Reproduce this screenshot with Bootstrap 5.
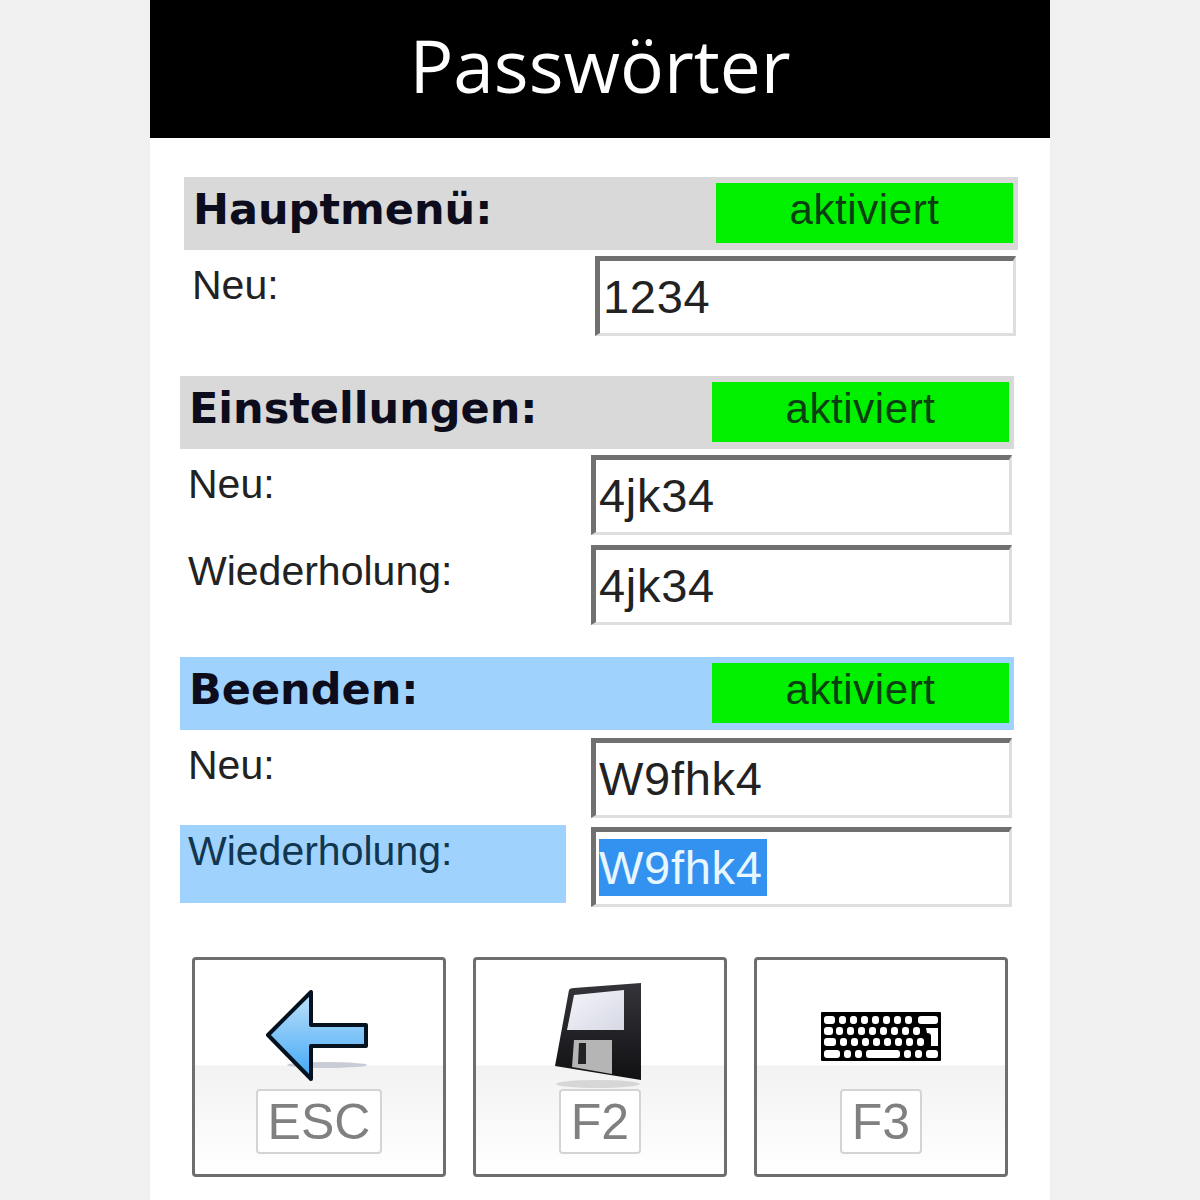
<!DOCTYPE html>
<html lang="de">

<head>
    <meta charset="UTF-8">
    <title>Passwörter</title>
    <meta name="viewport" content="width=device-width, initial-scale=1">
    <link href="https://cdn.jsdelivr.net/npm/bootstrap@5.3.0/dist/css/bootstrap.min.css" rel="stylesheet">
    <style>
        html, body { height: 100%; }
        body { background: #f0f0f0; font-family: "Liberation Sans", Arial, sans-serif; color: #1a1a1a; overflow: hidden; }
        .pw-panel { width: 900px; height: 1200px; margin: 0 auto; background: #fff; overflow: hidden; }
        .pw-title { height: 138px; background: #000; color: #fff; font-family: "Open Sans", sans-serif; font-size: 73px; line-height: 130px; }
        .pw-body { padding: 39px 36px 0 30px; }
        .pw-section { margin-bottom: 32px; }
        .pw-section.first { padding-left: 4px; margin-right: -4px; margin-bottom: 40px; }
        .pw-section.last .pw-field { margin-top: 2px; }
        .pw-head { height: 73px; background: #d9d9d9; padding: 6px 5px 7px 9px; }
        .pw-head.active { background: #9fd3fd; }
        .pw-head-label { font-family: "DejaVu Sans", sans-serif; font-weight: 700; font-size: 43px; line-height: 52px; color: #0c0c1c; }
        .pw-state { width: 297px; height: 60px; background: #00f000; color: #0a3f12; font-size: 42px; line-height: 54px; text-align: center; letter-spacing: .6px; }
        .pw-row { height: 80px; margin-top: 6px; }
        .pw-row + .pw-row { margin-top: 10px; }
        .pw-row.tight { margin-top: 9px; }
        .pw-label { width: 386px; height: 78px; padding-left: 8px; font-size: 41px; line-height: 58px; color: #222; }
        .pw-row + .pw-row .pw-label { margin-top: -2px; line-height: 56px; }
        .pw-row.tight .pw-label { margin-top: 0; line-height: 52px; }
        .pw-label.active { background: #9fd3fd; color: #12364f; }
        .pw-field { width: 421px; height: 80px; margin-left: 25px; background: #fff; border-style: solid; border-color: #707070 #dedede #dedede #707070; border-width: 5px 3px 3px 5px; padding: 8px 0 0 3px; font-size: 47px; line-height: 56px; letter-spacing: .7px; color: #222; }
        .pw-field .picked { display: inline-block; vertical-align: top; margin-top: -1px; line-height: 57px; background: #3392f0; color: #e8f6ff; padding-right: 4px; }
        .pw-keys { gap: 27px; padding-left: 12px; margin-top: 52px; }
        .pw-key { width: 254px; height: 220px; border: 3px solid #6e6e6e; border-radius: 4px; background: linear-gradient(#fff 0, #fff 49%, #f2f2f2 49.5%, #fff 100%); }
        .pw-key svg { display: block; filter: blur(.5px); }
        .pw-cap { height: 65px; margin-top: 1px; padding: 0 10px; border: 2px solid #d4d4d4; border-radius: 4px; background: #fff; color: #808080; font-size: 50px; line-height: 62px; }
        .pw-icon { height: 128px; }
        .pw-lift-arrow { margin: 0 4px 5px 0; }
        .pw-lift-keyboard { margin-bottom: 26px; }
    </style>
</head>

<body>
    <div class="pw-panel">
        <div class="pw-title text-center">Passwörter</div>

        <div class="pw-body">
            <div class="pw-section first">
                <div class="pw-head d-flex justify-content-between">
                    <div class="pw-head-label">Hauptmenü:</div>
                    <div class="pw-state">aktiviert</div>
                </div>
                <div class="pw-row d-flex">
                    <div class="pw-label">Neu:</div>
                    <div class="pw-field">1234</div>
                </div>
            </div>

            <div class="pw-section">
                <div class="pw-head d-flex justify-content-between">
                    <div class="pw-head-label">Einstellungen:</div>
                    <div class="pw-state">aktiviert</div>
                </div>
                <div class="pw-row d-flex">
                    <div class="pw-label">Neu:</div>
                    <div class="pw-field">4jk34</div>
                </div>
                <div class="pw-row d-flex">
                    <div class="pw-label">Wiederholung:</div>
                    <div class="pw-field">4jk34</div>
                </div>
            </div>

            <div class="pw-section last">
                <div class="pw-head active d-flex justify-content-between">
                    <div class="pw-head-label">Beenden:</div>
                    <div class="pw-state">aktiviert</div>
                </div>
                <div class="pw-row d-flex">
                    <div class="pw-label">Neu:</div>
                    <div class="pw-field">W9fhk4</div>
                </div>
                <div class="pw-row tight d-flex">
                    <div class="pw-label active">Wiederholung:</div>
                    <div class="pw-field"><span class="picked">W9fhk4</span></div>
                </div>
            </div>

            <div class="pw-keys d-flex">
                <div class="pw-key d-flex flex-column align-items-center">
                    <div class="pw-icon d-flex align-items-end">
                        <svg class="pw-lift-arrow" width="104" height="94" viewBox="0 0 104 94">
                            <defs>
                                <linearGradient id="arrowFill" x1="0" y1="0" x2="0" y2="1">
                                    <stop offset="0" stop-color="#bfe2fb"/>
                                    <stop offset="1" stop-color="#3fa6f5"/>
                                </linearGradient>
                            </defs>
                            <ellipse cx="62" cy="76" rx="40" ry="3" fill="#c9ccd6"/>
                            <path d="M3 46 L46 3 V36 H101 V57 H46 V90 Z" fill="url(#arrowFill)" stroke="#04111f" stroke-width="4" stroke-linejoin="round"/>
                        </svg>
                    </div>
                    <div class="pw-cap">ESC</div>
                </div>

                <div class="pw-key d-flex flex-column align-items-center">
                    <div class="pw-icon d-flex align-items-end">
                        <svg width="92" height="106" viewBox="0 0 92 106">
                            <defs>
                                <linearGradient id="diskShade" x1="0" y1="0" x2="0" y2="1">
                                    <stop offset="0" stop-color="#34343a"/>
                                    <stop offset="1" stop-color="#111114"/>
                                </linearGradient>
                                <linearGradient id="diskLabel" x1="0" y1="0" x2="1" y2="1">
                                    <stop offset="0" stop-color="#f4f5fa"/>
                                    <stop offset="1" stop-color="#d6d8e4"/>
                                </linearGradient>
                            </defs>
                            <ellipse cx="44" cy="102" rx="42" ry="4" fill="#d6d6d6"/>
                            <path d="M15 8 Q16 6 20 6 L87 1 V98 L1 84 Z" fill="url(#diskShade)"/>
                            <path d="M20 13 L70 8 V48 L13 48 Z" fill="url(#diskLabel)"/>
                            <path d="M20 58 L58 58 V92 L18 85 Z" fill="#b5b5b5"/>
                            <path d="M25 61 H32 V82 H24 Z" fill="#222226"/>
                        </svg>
                    </div>
                    <div class="pw-cap">F2</div>
                </div>

                <div class="pw-key d-flex flex-column align-items-center">
                    <div class="pw-icon d-flex align-items-end">
                        <svg class="pw-lift-keyboard" width="120" height="50" viewBox="0 0 120 50">
                            <rect width="120" height="49" rx="1" fill="#000"/>
                            <g fill="#fff">
                                <rect x="3" y="4" width="11" height="8" rx="3"/><rect x="18" y="4" width="7" height="8" rx="3"/><rect x="29" y="4" width="7" height="8" rx="3"/><rect x="40" y="4" width="7" height="8" rx="3"/><rect x="51" y="4" width="7" height="8" rx="3"/><rect x="62" y="4" width="7" height="8" rx="3"/><rect x="73" y="4" width="7" height="8" rx="3"/><rect x="84" y="4" width="7" height="8" rx="3"/><rect x="97" y="4" width="20" height="8" rx="3"/>
                                <rect x="3" y="15" width="9" height="8" rx="3"/><rect x="15" y="15" width="7" height="8" rx="3"/><rect x="26" y="15" width="7" height="8" rx="3"/><rect x="37" y="15" width="7" height="8" rx="3"/><rect x="48" y="15" width="7" height="8" rx="3"/><rect x="59" y="15" width="7" height="8" rx="3"/><rect x="70" y="15" width="7" height="8" rx="3"/><rect x="81" y="15" width="7" height="8" rx="3"/><rect x="92" y="15" width="7" height="8" rx="3"/>
                                <path d="M105 16 H117 V34 H110 V24 Q110 21 106 21 Z"/>
                                <rect x="3" y="26" width="12" height="8" rx="3"/><rect x="19" y="26" width="7" height="8" rx="3"/><rect x="30" y="26" width="7" height="8" rx="3"/><rect x="41" y="26" width="7" height="8" rx="3"/><rect x="52" y="26" width="7" height="8" rx="3"/><rect x="63" y="26" width="7" height="8" rx="3"/><rect x="74" y="26" width="7" height="8" rx="3"/><rect x="85" y="26" width="7" height="8" rx="3"/><rect x="96" y="26" width="7" height="8" rx="3"/>
                                <rect x="3" y="38" width="16" height="8" rx="3"/><rect x="23" y="38" width="7" height="8" rx="3"/><rect x="34" y="38" width="7" height="8" rx="3"/><rect x="45" y="38" width="34" height="8" rx="3"/><rect x="83" y="38" width="7" height="8" rx="3"/><rect x="94" y="38" width="7" height="8" rx="3"/><rect x="105" y="38" width="12" height="8" rx="3"/>
                            </g>
                        </svg>
                    </div>
                    <div class="pw-cap">F3</div>
                </div>
            </div>
        </div>
    </div>

    <script src="https://cdn.jsdelivr.net/npm/bootstrap@5.3.0/dist/js/bootstrap.bundle.min.js"></script>
</body>

</html>
